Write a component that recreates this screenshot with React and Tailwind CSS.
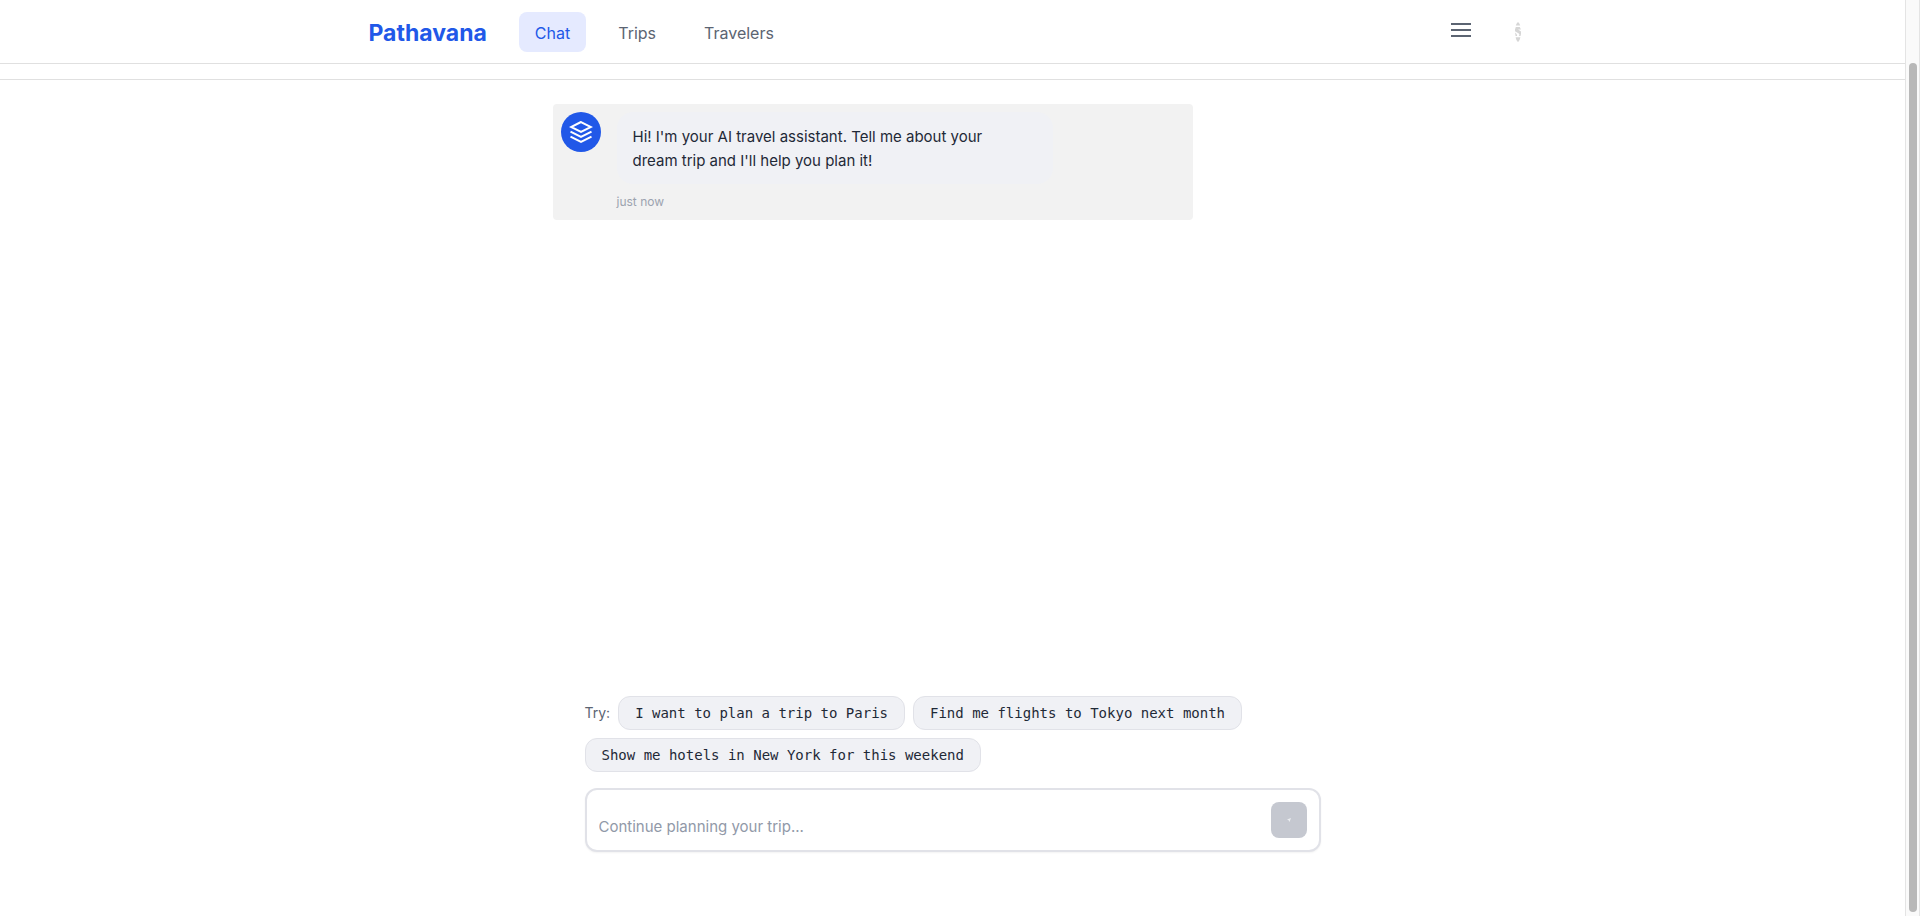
import { useState } from "react";

const LINKS = [
  { label: "Chat", active: true },
  { label: "Trips", active: false },
  { label: "Travelers", active: false },
];

const SUGGESTIONS = [
  "I want to plan a trip to Paris",
  "Find me flights to Tokyo next month",
  "Show me hotels in New York for this weekend",
];

function LayersIcon() {
  return (
    <svg
      className="size-6"
      viewBox="0 0 24 24"
      fill="none"
      stroke="currentColor"
      strokeWidth="2"
      aria-hidden="true"
    >
      <path d="M12 2 2 7l10 5 10-5-10-5z" />
      <path d="m1.5 16.7 10.5 5.3 10.5-5.3" />
      <path d="m1.5 11.7 10.5 5.3 10.5-5.3" />
    </svg>
  );
}

function AccountMark() {
  return (
    <svg className="h-5 w-1.5" viewBox="0 0 6 20" fill="#d6d6d6" aria-hidden="true">
      <path d="M3 0C4 .8 4.800 2 5.200 3.400H.8C1.200 2 2 .8 3 0z" />
      <path d="M.8 5H4.800L5.900 7.500H3L6 9.500V12L5.500 14H3.800C4.800 12.800 4.500 11.800 3.400 11.200L0 9.200V7.500z" />
      <path d="M0 10.500 2 12.500V14H.6z" />
      <path d="M.6 15.200H5.400C5 17.200 4.200 19.100 3 20C1.800 19.100 1 17.200.6 15.200z" />
    </svg>
  );
}

function Header() {
  return (
    <header className="border-b border-[#e0e0e0] bg-white">
      <div className="mx-auto flex h-[63px] max-w-[1200px] items-center justify-between px-4">
        <div className="flex items-center gap-8">
          <a href="#home" className="pt-0.5 text-[23px] font-bold text-[#2158e8]">
            Pathavana
          </a>
          <nav className="flex items-center gap-4">
            {LINKS.map((link) => (
              <a
                key={link.label}
                href={"#" + link.label.toLowerCase()}
                className={
                  link.active
                    ? "rounded-lg bg-[#e5eaff] px-4 pt-[9px] pb-[7px] text-base text-[#2158e8]"
                    : "rounded-lg px-4 pt-[9px] pb-[7px] text-base text-[#5b6472]"
                }
              >
                {link.label}
              </a>
            ))}
          </nav>
        </div>
        <div className="flex items-center gap-11 pr-4">
          <button type="button" aria-label="Menu" className="flex w-5 flex-col gap-1 pb-1">
            <span className="h-0.5 w-full bg-[#5b6472]" />
            <span className="h-0.5 w-full bg-[#5b6472]" />
            <span className="h-0.5 w-full bg-[#5b6472]" />
          </button>
          <button type="button" aria-label="Account">
            <AccountMark />
          </button>
        </div>
      </div>
    </header>
  );
}

function AssistantMessage() {
  return (
    <article className="flex w-4/5 gap-4 rounded bg-[#f2f2f2] p-2">
      <div className="flex size-10 shrink-0 items-center justify-center rounded-full bg-[#2158e8] text-white">
        <LayersIcon />
      </div>
      <div className="w-[436px]">
        <p className="rounded-2xl bg-[#f0f1f5] pt-[13px] pr-8 pb-[11px] pl-4 text-[#1f2937]">
          Hi! I'm your AI travel assistant. Tell me about your dream trip and I'll help you plan it!
        </p>
        <time className="mt-2 block text-xs leading-5 text-[#9ca3af]">just now</time>
      </div>
    </article>
  );
}

function Composer() {
  const [text, setText] = useState("");
  return (
    <form
      onSubmit={(e) => e.preventDefault()}
      className="flex h-16 items-start gap-2 rounded-xl border-2 border-[#e1e2e8] bg-white p-3 shadow-xs"
    >
      <textarea
        aria-label="Message"
        rows={1}
        value={text}
        onChange={(e) => setText(e.target.value)}
        placeholder="Continue planning your trip..."
        className="mt-[13px] h-6 min-w-0 flex-1 resize-none overflow-hidden text-[#1f2937] outline-none placeholder:text-[#9199a8]"
      />
      <button
        type="submit"
        aria-label="Send"
        className="flex size-9 shrink-0 items-center justify-center rounded-lg bg-[#c5c8d0] text-[#eceef1]"
      >
        <svg className="size-1" viewBox="0 0 4 4" fill="currentColor" aria-hidden="true">
          <path d="M4 0 0 1.500 1.600 2.300 2.500 4z" />
        </svg>
      </button>
    </form>
  );
}

export default function App() {
  return (
    <div className="flex min-h-screen bg-white font-[Inter,sans-serif] text-[15px] leading-6">
      <div className="flex min-w-0 flex-1 flex-col">
        <Header />
        <div className="h-4 border-b border-[#e0e0e0]" />
        <main className="mx-auto flex w-full max-w-[800px] flex-1 flex-col justify-between pt-6">
          <AssistantMessage />
          <section className="px-8 pb-16">
            <div className="mb-4 flex flex-wrap items-center gap-2">
              <span className="text-sm text-[#5b6472]">Try:</span>
              {SUGGESTIONS.map((s) => (
                <button
                  key={s}
                  type="button"
                  className="h-[34px] rounded-xl border border-[#e1e2e8] bg-[#f0f1f5] px-4 font-['DejaVu_Sans_Mono',monospace] text-sm text-[#1f2937]"
                >
                  {s}
                </button>
              ))}
            </div>
            <Composer />
          </section>
        </main>
      </div>
      <div
        aria-hidden="true"
        className="flex w-[15px] shrink-0 flex-col items-center border-x border-[#e4e4e4] bg-[#fafafa] pt-[63px] pb-1"
      >
        <div className="w-2 flex-1 rounded-full bg-[#b8b8b8]" />
      </div>
    </div>
  );
}
